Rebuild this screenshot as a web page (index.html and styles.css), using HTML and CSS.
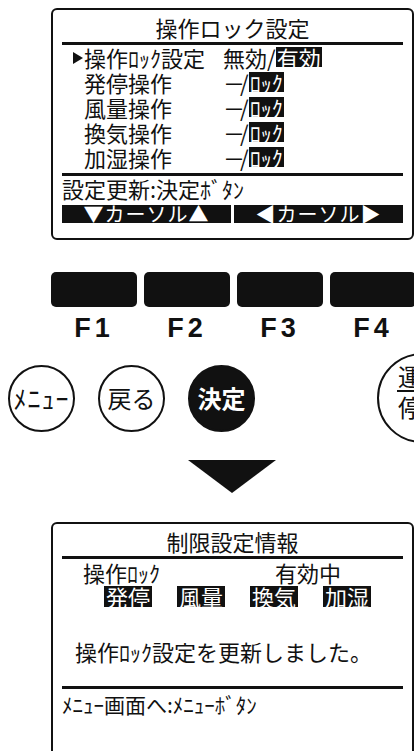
FILE: index.html
```html
<!DOCTYPE html>
<html lang="ja">
<head>
    <meta charset="UTF-8">
    <title>操作ロック設定</title>
    <link rel="stylesheet" href="styles.css">
</head>
<body>
    <div class="lcd lcd-top">
        <div class="lcd-title">操作ロック設定</div>
        <div class="rule"></div>
        <div class="items">
            <div class="item"><span class="cursor"></span><span class="item-name">操作ﾛｯｸ設定</span><span class="item-val">無効/<span class="inv">有効</span></span></div>
            <div class="item"><span class="cursor-off"></span><span class="item-name">発停操作</span><span class="item-val"><span class="dash">－</span>/<span class="inv">ﾛｯｸ</span></span></div>
            <div class="item"><span class="cursor-off"></span><span class="item-name">風量操作</span><span class="item-val"><span class="dash">－</span>/<span class="inv">ﾛｯｸ</span></span></div>
            <div class="item"><span class="cursor-off"></span><span class="item-name">換気操作</span><span class="item-val"><span class="dash">－</span>/<span class="inv">ﾛｯｸ</span></span></div>
            <div class="item"><span class="cursor-off"></span><span class="item-name">加湿操作</span><span class="item-val"><span class="dash">－</span>/<span class="inv">ﾛｯｸ</span></span></div>
        </div>
        <div class="rule rule-low"></div>
        <div class="hint">設定更新:決定ﾎﾞﾀﾝ</div>
        <div class="softkeys">
            <div class="softkey">▼カーソル▲</div>
            <div class="softkey">◀カーソル▶</div>
        </div>
    </div>

    <div class="fkeys">
        <div class="fkey"><div class="fkey-btn"></div><div class="fkey-name">F1</div></div>
        <div class="fkey"><div class="fkey-btn"></div><div class="fkey-name">F2</div></div>
        <div class="fkey"><div class="fkey-btn"></div><div class="fkey-name">F3</div></div>
        <div class="fkey"><div class="fkey-btn"></div><div class="fkey-name">F4</div></div>
    </div>

    <div class="buttons">
        <div class="round round-menu">ﾒﾆｭｰ</div>
        <div class="round">戻る</div>
        <div class="round round-dark">決定</div>
        <div class="round round-big">
            <span>運転</span>
            <span class="round-line"></span>
            <span>停止</span>
        </div>
    </div>

    <div class="arrow"></div>

    <div class="lcd lcd-bottom">
        <div class="lcd-title">制限設定情報</div>
        <div class="rule"></div>
        <div class="status"><span class="status-name">操作ﾛｯｸ</span><span>有効中</span></div>
        <div class="locked">
            <span class="inv">発停</span>
            <span class="inv">風量</span>
            <span class="inv">換気</span>
            <span class="inv">加湿</span>
        </div>
        <div class="message">操作ﾛｯｸ設定を更新しました。</div>
        <div class="rule rule-msg"></div>
        <div class="back">ﾒﾆｭｰ画面へ:ﾒﾆｭｰﾎﾞﾀﾝ</div>
    </div>
</body>
</html>
```

FILE: styles.css
```css
body{
    margin: 0;
    width: 414px;
    height: 751px;
    overflow: hidden;
    background: #fff;
    color: #111;
    font-family: "Noto Sans CJK JP", "Noto Sans", sans-serif;
}

/* LCD panels */
.lcd{
    box-sizing: border-box;
    width: 363px;
    margin-left: 51px;
    border: 2px solid #111;
    border-radius: 6px;
    padding: 4px 9px 15px;
    font-size: 22px;
}
.lcd-top{
    margin-top: 8px;
    height: 232px;
}
.lcd-bottom{
    margin-top: 29px;
    height: 260px;
}
.lcd-title{
    text-align: center;
    line-height: 26px;
}
.rule{
    height: 3px;
    margin-top: 2px;
    background: #111;
}
.rule-low{
    margin-top: 3px;
}
.inv{
    display: inline-block;
    padding: 0 1px;
    line-height: 20px;
    background: #111;
    color: #fff;
}

.items{
    padding-left: 11px;
}
.item{
    display: flex;
    align-items: center;
    height: 25px;
    line-height: 25px;
}
.cursor,
.cursor-off{
    width: 11px;
    flex: none;
}
.cursor{
    box-sizing: border-box;
    width: 0;
    height: 0;
    border-left: 10px solid #111;
    border-top: 6.5px solid transparent;
    border-bottom: 6.5px solid transparent;
    margin-right: 1px;
}
.item-name{
    width: 139px;
    flex: none;
}
.dash{
    letter-spacing: -5px;
}
.hint{
    line-height: 25px;
}
.softkeys{
    display: flex;
    gap: 3px;
    margin-top: 4px;
}
.softkey{
    flex: 1;
    height: 18px;
    line-height: 18px;
    font-size: 20px;
    letter-spacing: 1px;
    text-align: center;
    background: #111;
    color: #fff;
}

/* function keys */
.fkeys{
    display: flex;
    gap: 7px;
    margin: 32px 0 0 51px;
}
.fkey{
    flex: none;
    width: 86px;
}
.fkey-btn{
    height: 35px;
    border-radius: 5px;
    background: #111;
}
.fkey-name{
    margin-top: 8px;
    font-family: "Liberation Sans", Arial, sans-serif;
    font-weight: bold;
    font-size: 27px;
    line-height: 26px;
    letter-spacing: 4px;
    text-align: center;
}

/* round buttons */
.buttons{
    display: flex;
    align-items: center;
    gap: 23px;
    margin-top: 12px;
    padding-left: 8px;
}
.round{
    box-sizing: border-box;
    flex: none;
    display: flex;
    align-items: center;
    justify-content: center;
    width: 67px;
    height: 67px;
    border: 2px solid #111;
    border-radius: 50%;
    font-size: 24px;
    line-height: 1;
}
.round-menu{
    font-size: 26px;
    letter-spacing: 1px;
}
.round-dark{
    background: #111;
    color: #fff;
    font-weight: bold;
}
.round-big{
    flex-direction: column;
    width: 90px;
    height: 90px;
    margin-left: 99px;
    padding-bottom: 14px;
    line-height: 25px;
}
.round-line{
    width: 50px;
    height: 2px;
    margin: 2px 0;
    background: #111;
}

.arrow{
    width: 0;
    height: 0;
    margin: 17px 0 0 188px;
    border-left: 44px solid transparent;
    border-right: 44px solid transparent;
    border-top: 33px solid #111;
}

/* result panel */
.status{
    display: flex;
    margin-top: 1px;
    padding-left: 21px;
    line-height: 25px;
}
.status-name{
    width: 192px;
}
.locked{
    display: flex;
    gap: 25px;
    margin-top: 1px;
    padding-left: 42px;
}
.locked .inv{
    padding: 0 2px;
    line-height: 21px;
}
.message{
    margin-top: 32px;
    padding-left: 13px;
    line-height: 25px;
}
.rule-msg{
    margin-top: 22px;
}
.back{
    margin-top: 3px;
    font-size: 21px;
    line-height: 24px;
}
```
